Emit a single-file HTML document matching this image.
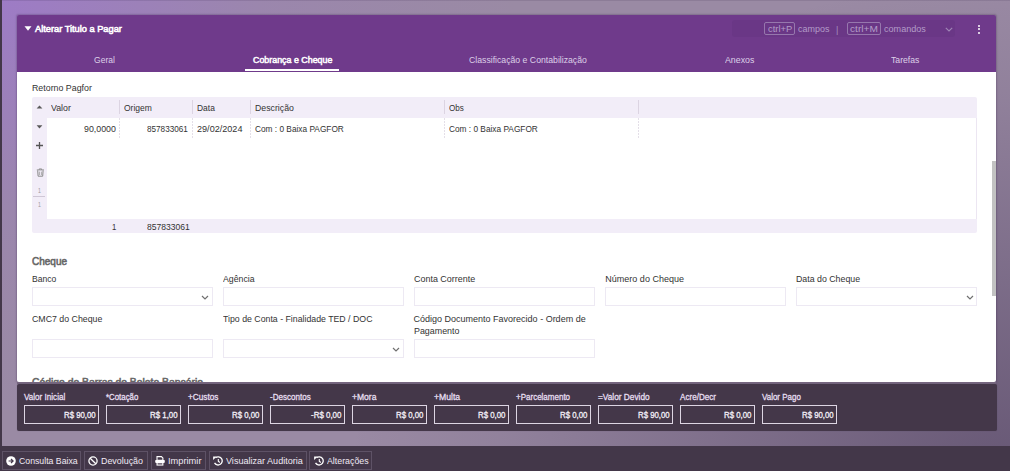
<!DOCTYPE html>
<html><head><meta charset="utf-8">
<style>
html,body{margin:0;padding:0;}
body{width:1010px;height:471px;overflow:hidden;position:relative;font-family:"Liberation Sans",sans-serif;
background:radial-gradient(ellipse 520px 420px at 0 0, rgba(160,112,224,0.56) 0%, rgba(160,112,224,0.32) 30%, rgba(160,112,224,0.15) 50%, rgba(160,112,224,0.05) 80%, rgba(160,112,224,0) 100%),radial-gradient(ellipse 660px 490px at 1010px 471px, rgba(63,48,80,0.56) 0%, rgba(63,48,80,0.34) 37%, rgba(63,48,80,0.1) 77%, rgba(63,48,80,0) 100%),#9a8aa4;}
.a{position:absolute;box-sizing:border-box;}
.t{position:absolute;white-space:nowrap;transform-origin:0 0;font-family:"Liberation Sans",sans-serif;}
#bgbot{left:0;top:240px;width:1010px;height:231px;background:linear-gradient(90deg,#9a80b4 0%,#8b7799 45%,#7a6888 75%,#6e5c7c 100%);}
#strip{left:0;top:0;width:2px;height:471px;background:#433749;}
#topl{left:0;top:0;width:1010px;height:1px;background:rgba(50,30,70,0.13);}
#hdr{left:17px;top:15px;width:979px;height:57px;background:#6f3a8b;border-radius:2px 2px 0 0;}
#body{left:17px;top:72px;width:979px;height:310px;background:#fff;border-radius:0 0 2px 2px;overflow:hidden;}
#srch{left:732px;top:20px;width:223px;height:17px;background:#6a3786;border-radius:3px;}
.kbd{border:1px solid #9677ad;border-radius:2px;}
#ul{left:245px;top:69px;width:94px;height:2px;background:#fff;}
#grid{left:32px;top:97px;width:945px;height:136px;background:#f2edf8;border-radius:2px;}
#gdata{left:47px;top:118px;width:929px;height:101px;background:#fff;}
.hs{width:1px;top:100px;height:14px;background:#dcd4e2;}
.ds{width:1px;top:118px;height:20px;background:repeating-linear-gradient(180deg,#e4dfe8 0 2px,transparent 2px 3px);}
.inp{background:#fff;border:1px solid #ede9f3;height:19px;}
#panel{left:17px;top:384px;width:980px;height:47px;background:#443749;border-radius:2px;box-shadow:0 0 1px rgba(30,20,40,0.3);}
.vb{border:1px solid #ddd5e3;width:75px;height:19px;top:405px;}
#tb{left:0;top:446px;width:1010px;height:25px;background:#433749;}
.btn{border:1px solid #5e5266;top:451px;height:19px;}
#scr{left:992px;top:161px;width:4px;height:135px;background:#c2c2c2;}
</style></head><body>
<div class="a" id="topl"></div>
<div class="a" id="strip"></div>
<div class="a" style="left:17px;top:15px;width:979px;height:367px;border-radius:2px;box-shadow:0 0 1.5px 0.5px rgba(40,20,60,0.22)"></div>
<div class="a" id="hdr"></div>
<div class="a" id="body"><span class="t" style="left:15.02px;top:305.00px;font-size:10px;line-height:11px;color:#666666;transform:scaleX(1.0354);-webkit-text-stroke:0.55px #666666;">Código de Barras do Boleto Bancário</span></div>
<div class="a" id="scr"></div>
<div class="a" id="srch"></div>
<div class="a kbd" style="left:764px;top:22px;width:31px;height:13px;"></div>
<div class="a kbd" style="left:847px;top:22px;width:34px;height:13px;"></div>
<svg class="a" style="left:944.5px;top:26.5px" width="8" height="5" viewBox="0 0 8 5"><path d="M0.8 0.8 L4 3.9 L7.2 0.8" fill="none" stroke="#a086b6" stroke-width="1.1"/></svg>
<div class="a" style="left:978.2px;top:24.7px;width:2.2px;height:2.2px;background:#fff;border-radius:50%"></div>
<div class="a" style="left:978.2px;top:28.2px;width:2.2px;height:2.2px;background:#fff;border-radius:50%"></div>
<div class="a" style="left:978.2px;top:31.7px;width:2.2px;height:2.2px;background:#fff;border-radius:50%"></div>
<svg class="a" style="left:24px;top:26px" width="8" height="5" viewBox="0 0 8 5"><path d="M0.5 0.3 L7.5 0.3 L4 4.7 Z" fill="#fff"/></svg>
<div class="a" id="ul"></div>
<div class="a" id="grid"></div>
<div class="a" id="gdata"></div>
<div class="a hs" style="left:119px"></div>
<div class="a hs" style="left:192px"></div>
<div class="a hs" style="left:250px"></div>
<div class="a hs" style="left:444px"></div>
<div class="a hs" style="left:638px"></div>
<div class="a ds" style="left:119px"></div>
<div class="a ds" style="left:192px"></div>
<div class="a ds" style="left:250px"></div>
<div class="a ds" style="left:444px"></div>
<div class="a ds" style="left:638px"></div>
<div class="a" style="left:976px;top:118px;width:1px;height:101px;background:#ece6f2"></div>
<svg class="a" style="left:36px;top:104.6px" width="7" height="4" viewBox="0 0 7 4"><path d="M0.6 3.6 L6.4 3.6 L3.5 0.4 Z" fill="#5a5a5a"/></svg>
<svg class="a" style="left:36px;top:124.5px" width="7" height="4" viewBox="0 0 7 4"><path d="M0.6 0.3 L6.4 0.3 L3.5 3.5 Z" fill="#5a5a5a"/></svg>
<svg class="a" style="left:35px;top:141px" width="9" height="9" viewBox="0 0 9 9"><path d="M4.5 1 V8 M1 4.5 H8" stroke="#555" stroke-width="1.3"/></svg>
<svg class="a" style="left:35.5px;top:168px" width="9" height="9" viewBox="0 0 9 9"><path d="M0.8 1.9 H8 M3.2 1.9 V0.9 H5.6 V1.9" fill="none" stroke="#8a8a8a" stroke-width="0.9"/><path d="M1.7 2.4 L2.1 8.2 H6.7 L7.1 2.4" fill="none" stroke="#8a8a8a" stroke-width="1"/><path d="M3.4 3.6 V7 M5.4 3.6 V7" stroke="#9a9a9a" stroke-width="0.8"/></svg>
<div class="a" style="left:33px;top:196px;width:12px;height:1px;background:#cfc7d6"></div>
<!-- inputs row1 -->
<div class="a inp" style="left:32px;top:287px;width:181px"></div>
<div class="a inp" style="left:223px;top:287px;width:181px"></div>
<div class="a inp" style="left:414px;top:287px;width:181px"></div>
<div class="a inp" style="left:605px;top:287px;width:181px"></div>
<div class="a inp" style="left:796px;top:287px;width:181px"></div>
<div class="a inp" style="left:32px;top:339px;width:181px"></div>
<div class="a inp" style="left:223px;top:339px;width:181px"></div>
<div class="a inp" style="left:414px;top:339px;width:181px"></div>
<svg class="a" style="left:201px;top:294.5px" width="8" height="5" viewBox="0 0 8 5"><path d="M1 1 L4 4 L7 1" fill="none" stroke="#707070" stroke-width="1.2"/></svg>
<svg class="a" style="left:965.5px;top:294.5px" width="8" height="5" viewBox="0 0 8 5"><path d="M1 1 L4 4 L7 1" fill="none" stroke="#707070" stroke-width="1.2"/></svg>
<svg class="a" style="left:392px;top:346.5px" width="8" height="5" viewBox="0 0 8 5"><path d="M1 1 L4 4 L7 1" fill="none" stroke="#707070" stroke-width="1.2"/></svg>
<div class="a" style="left:17px;top:382px;width:979px;height:2px;background:#76667f"></div>
<div class="a" id="panel"></div>
<div class="a vb" style="left:24px"></div>
<div class="a vb" style="left:106px"></div>
<div class="a vb" style="left:188px"></div>
<div class="a vb" style="left:270px"></div>
<div class="a vb" style="left:352px"></div>
<div class="a vb" style="left:434px"></div>
<div class="a vb" style="left:516px"></div>
<div class="a vb" style="left:598px"></div>
<div class="a vb" style="left:680px"></div>
<div class="a vb" style="left:762px"></div>
<div class="a" id="tb"></div>
<div class="a btn" style="left:2px;width:79px"></div>
<div class="a btn" style="left:84px;width:64px"></div>
<div class="a btn" style="left:151px;width:55px"></div>
<div class="a btn" style="left:209px;width:98px"></div>
<div class="a btn" style="left:309px;width:63px"></div>
<svg class="a" style="left:6px;top:456px" width="10" height="10" viewBox="0 0 10 10"><circle cx="5" cy="5" r="4.8" fill="#fff"/><path d="M2.6 5 H7 M5 3 L7.1 5 L5 7" fill="none" stroke="#42364a" stroke-width="1.2"/></svg>
<svg class="a" style="left:88px;top:456px" width="10" height="10" viewBox="0 0 10 10"><circle cx="5" cy="5" r="4.1" fill="none" stroke="#fff" stroke-width="1.3"/><path d="M2.2 2.2 L7.8 7.8" stroke="#fff" stroke-width="1.3"/></svg>
<svg class="a" style="left:154.5px;top:456px" width="10" height="10" viewBox="0 0 10 10"><path d="M2 0.6 H6.4 L7.9 2.1 V4.2 H2 Z" fill="none" stroke="#fff" stroke-width="1.1"/><rect x="0.2" y="3.9" width="9.6" height="3" rx="0.8" fill="#fff"/><rect x="1.5" y="6.4" width="6.9" height="3.2" fill="#fff"/><rect x="2.6" y="7.3" width="4.7" height="1.2" fill="#433749"/></svg>
<svg class="a" style="left:212.5px;top:456px" width="10" height="10" viewBox="0 0 10 10"><path d="M2.46 1.76 A4.1 4.1 0 1 1 1.55 6.95" fill="none" stroke="#fff" stroke-width="1.3"/><path d="M0.1 0.6 L3.6 0.6 L0.1 4.1 Z" fill="#fff"/><path d="M5.3 2.9 V5.3 L6.8 6.5" fill="none" stroke="#fff" stroke-width="1.1"/></svg>
<svg class="a" style="left:313.5px;top:456px" width="10" height="10" viewBox="0 0 10 10"><path d="M2.46 1.76 A4.1 4.1 0 1 1 1.55 6.95" fill="none" stroke="#fff" stroke-width="1.3"/><path d="M0.1 0.6 L3.6 0.6 L0.1 4.1 Z" fill="#fff"/><path d="M5.3 2.9 V5.3 L6.8 6.5" fill="none" stroke="#fff" stroke-width="1.1"/></svg>
<span class="t" style="left:34.97px;top:24.20px;font-size:9px;line-height:10px;color:#ffffff;transform:scaleX(1.0274);-webkit-text-stroke:0.55px #fff;">Alterar Titulo a Pagar</span>
<span class="t" style="left:798.07px;top:24.30px;font-size:9px;line-height:10px;color:#b39cc8;transform:scaleX(0.9952);">campos</span>
<span class="t" style="left:835.57px;top:25.30px;font-size:9px;line-height:10px;color:#a68cbc;transform:scaleX(1.0086);">|</span>
<span class="t" style="left:883.57px;top:24.20px;font-size:9px;line-height:10px;color:#b39cc8;transform:scaleX(1.0080);">comandos</span>
<span class="t" style="left:767.57px;top:24.10px;font-size:9px;line-height:10px;color:#b39cc8;transform:scaleX(1.0386);">ctrl+P</span>
<span class="t" style="left:849.87px;top:24.10px;font-size:9px;line-height:10px;color:#b39cc8;transform:scaleX(1.1258);">ctrl+M</span>
<span class="t" style="left:93.57px;top:54.60px;font-size:9px;line-height:10px;color:#ddd0e8;transform:scaleX(0.9477);">Geral</span>
<span class="t" style="left:252.57px;top:54.60px;font-size:9px;line-height:10px;color:#ffffff;transform:scaleX(0.9851);-webkit-text-stroke:0.5px #fff;">Cobrança e Cheque</span>
<span class="t" style="left:469.27px;top:54.60px;font-size:9px;line-height:10px;color:#ddd0e8;transform:scaleX(0.9656);">Classificação e Contabilização</span>
<span class="t" style="left:724.57px;top:54.60px;font-size:9px;line-height:10px;color:#ddd0e8;transform:scaleX(0.9778);">Anexos</span>
<span class="t" style="left:891.27px;top:54.60px;font-size:9px;line-height:10px;color:#ddd0e8;transform:scaleX(0.9610);">Tarefas</span>
<span class="t" style="left:32.17px;top:83.20px;font-size:9px;line-height:10px;color:#333333;transform:scaleX(0.9806);">Retorno Pagfor</span>
<span class="t" style="left:51.07px;top:103.20px;font-size:9px;line-height:10px;color:#333333;transform:scaleX(0.9764);">Valor</span>
<span class="t" style="left:124.27px;top:103.20px;font-size:9px;line-height:10px;color:#333333;transform:scaleX(0.9440);">Origem</span>
<span class="t" style="left:197.47px;top:103.20px;font-size:9px;line-height:10px;color:#333333;transform:scaleX(0.9394);">Data</span>
<span class="t" style="left:255.37px;top:103.20px;font-size:9px;line-height:10px;color:#333333;transform:scaleX(0.9712);">Descrição</span>
<span class="t" style="left:449.07px;top:103.20px;font-size:9px;line-height:10px;color:#333333;transform:scaleX(0.9000);">Obs</span>
<span class="t" style="left:83.77px;top:123.70px;font-size:9px;line-height:10px;color:#333333;transform:scaleX(0.9790);">90,0000</span>
<span class="t" style="left:147.27px;top:123.70px;font-size:9px;line-height:10px;color:#333333;transform:scaleX(0.9068);">857833061</span>
<span class="t" style="left:197.47px;top:123.70px;font-size:9px;line-height:10px;color:#333333;transform:scaleX(1.0093);">29/02/2024</span>
<span class="t" style="left:255.37px;top:123.70px;font-size:9px;line-height:10px;color:#333333;transform:scaleX(0.9222);">Com : 0 Baixa PAGFOR</span>
<span class="t" style="left:449.27px;top:123.70px;font-size:9px;line-height:10px;color:#333333;transform:scaleX(0.9222);">Com : 0 Baixa PAGFOR</span>
<span class="t" style="left:111.87px;top:221.60px;font-size:9px;line-height:10px;color:#333333;transform:scaleX(0.8501);">1</span>
<span class="t" style="left:146.57px;top:221.60px;font-size:9px;line-height:10px;color:#333333;transform:scaleX(0.9512);">857833061</span>
<span class="t" style="left:37.89px;top:187.20px;font-size:6.5px;line-height:7px;color:#9a9a9a;transform:scaleX(0.8066);">1</span>
<span class="t" style="left:37.89px;top:201.20px;font-size:6.5px;line-height:7px;color:#9a9a9a;transform:scaleX(0.8066);">1</span>
<span class="t" style="left:32.02px;top:255.90px;font-size:10px;line-height:11px;color:#666666;-webkit-text-stroke:0.55px #666666;">Cheque</span>
<span class="t" style="left:32.07px;top:274.10px;font-size:9px;line-height:10px;color:#333333;transform:scaleX(0.9543);">Banco</span>
<span class="t" style="left:223.17px;top:274.10px;font-size:9px;line-height:10px;color:#333333;transform:scaleX(0.9703);">Agência</span>
<span class="t" style="left:414.07px;top:274.10px;font-size:9px;line-height:10px;color:#333333;transform:scaleX(0.9938);">Conta Corrente</span>
<span class="t" style="left:605.37px;top:274.10px;font-size:9px;line-height:10px;color:#333333;">Número do Cheque</span>
<span class="t" style="left:796.27px;top:274.10px;font-size:9px;line-height:10px;color:#333333;transform:scaleX(0.9771);">Data do Cheque</span>
<span class="t" style="left:31.77px;top:314.00px;font-size:9px;line-height:10px;color:#333333;transform:scaleX(0.9766);">CMC7 do Cheque</span>
<span class="t" style="left:223.47px;top:314.00px;font-size:9px;line-height:10px;color:#333333;transform:scaleX(0.9732);">Tipo de Conta - Finalidade TED / DOC</span>
<span class="t" style="left:413.57px;top:314.00px;font-size:9px;line-height:10px;color:#333333;">Código Documento Favorecido - Ordem de</span>
<span class="t" style="left:413.57px;top:325.80px;font-size:9px;line-height:10px;color:#333333;transform:scaleX(0.9873);">Pagamento</span>
<span class="t" style="left:23.57px;top:392.10px;font-size:9px;line-height:10px;color:#e6dff0;transform:scaleX(0.8998);-webkit-text-stroke:0.3px #e6dff0;">Valor Inicial</span>
<span class="t" style="left:64.17px;top:410.30px;font-size:9px;line-height:10px;color:#f4f0f8;transform:scaleX(0.8668);-webkit-text-stroke:0.3px #f4f0f8;">R$ 90,00</span>
<span class="t" style="left:105.57px;top:392.10px;font-size:9px;line-height:10px;color:#e6dff0;transform:scaleX(0.8740);-webkit-text-stroke:0.3px #e6dff0;">*Cotação</span>
<span class="t" style="left:150.17px;top:410.30px;font-size:9px;line-height:10px;color:#f4f0f8;transform:scaleX(0.8774);-webkit-text-stroke:0.3px #f4f0f8;">R$ 1,00</span>
<span class="t" style="left:187.57px;top:392.10px;font-size:9px;line-height:10px;color:#e6dff0;transform:scaleX(0.9154);-webkit-text-stroke:0.3px #e6dff0;">+Custos</span>
<span class="t" style="left:232.37px;top:410.30px;font-size:9px;line-height:10px;color:#f4f0f8;transform:scaleX(0.8710);-webkit-text-stroke:0.3px #f4f0f8;">R$ 0,00</span>
<span class="t" style="left:269.57px;top:392.10px;font-size:9px;line-height:10px;color:#e6dff0;transform:scaleX(0.8931);-webkit-text-stroke:0.3px #e6dff0;">-Descontos</span>
<span class="t" style="left:311.37px;top:410.30px;font-size:9px;line-height:10px;color:#f4f0f8;transform:scaleX(0.8822);-webkit-text-stroke:0.3px #f4f0f8;">-R$ 0,00</span>
<span class="t" style="left:351.57px;top:392.10px;font-size:9px;line-height:10px;color:#e6dff0;transform:scaleX(0.9495);-webkit-text-stroke:0.3px #e6dff0;">+Mora</span>
<span class="t" style="left:396.37px;top:410.30px;font-size:9px;line-height:10px;color:#f4f0f8;transform:scaleX(0.8710);-webkit-text-stroke:0.3px #f4f0f8;">R$ 0,00</span>
<span class="t" style="left:433.57px;top:392.10px;font-size:9px;line-height:10px;color:#e6dff0;transform:scaleX(0.9596);-webkit-text-stroke:0.3px #e6dff0;">+Multa</span>
<span class="t" style="left:478.37px;top:410.30px;font-size:9px;line-height:10px;color:#f4f0f8;transform:scaleX(0.8710);-webkit-text-stroke:0.3px #f4f0f8;">R$ 0,00</span>
<span class="t" style="left:515.57px;top:392.10px;font-size:9px;line-height:10px;color:#e6dff0;transform:scaleX(0.8893);-webkit-text-stroke:0.3px #e6dff0;">+Parcelamento</span>
<span class="t" style="left:560.37px;top:410.30px;font-size:9px;line-height:10px;color:#f4f0f8;transform:scaleX(0.8710);-webkit-text-stroke:0.3px #f4f0f8;">R$ 0,00</span>
<span class="t" style="left:597.57px;top:392.10px;font-size:9px;line-height:10px;color:#e6dff0;transform:scaleX(0.9205);-webkit-text-stroke:0.3px #e6dff0;">=Valor Devido</span>
<span class="t" style="left:638.17px;top:410.30px;font-size:9px;line-height:10px;color:#f4f0f8;transform:scaleX(0.8668);-webkit-text-stroke:0.3px #f4f0f8;">R$ 90,00</span>
<span class="t" style="left:679.57px;top:392.10px;font-size:9px;line-height:10px;color:#e6dff0;transform:scaleX(0.8987);-webkit-text-stroke:0.3px #e6dff0;">Acre/Decr</span>
<span class="t" style="left:724.37px;top:410.30px;font-size:9px;line-height:10px;color:#f4f0f8;transform:scaleX(0.8710);-webkit-text-stroke:0.3px #f4f0f8;">R$ 0,00</span>
<span class="t" style="left:761.57px;top:392.10px;font-size:9px;line-height:10px;color:#e6dff0;transform:scaleX(0.8858);-webkit-text-stroke:0.3px #e6dff0;">Valor Pago</span>
<span class="t" style="left:802.17px;top:410.30px;font-size:9px;line-height:10px;color:#f4f0f8;transform:scaleX(0.8668);-webkit-text-stroke:0.3px #f4f0f8;">R$ 90,00</span>
<span class="t" style="left:18.84px;top:455.00px;font-size:9.5px;line-height:11px;color:#f0eaf4;transform:scaleX(0.9187);">Consulta Baixa</span>
<span class="t" style="left:101.44px;top:455.00px;font-size:9.5px;line-height:11px;color:#f0eaf4;transform:scaleX(0.9359);">Devolução</span>
<span class="t" style="left:167.74px;top:455.00px;font-size:9.5px;line-height:11px;color:#f0eaf4;transform:scaleX(0.9767);">Imprimir</span>
<span class="t" style="left:225.74px;top:455.00px;font-size:9.5px;line-height:11px;color:#f0eaf4;transform:scaleX(0.9527);">Visualizar Auditoria</span>
<span class="t" style="left:326.54px;top:455.00px;font-size:9.5px;line-height:11px;color:#f0eaf4;transform:scaleX(0.9270);">Alterações</span>
</body></html>
